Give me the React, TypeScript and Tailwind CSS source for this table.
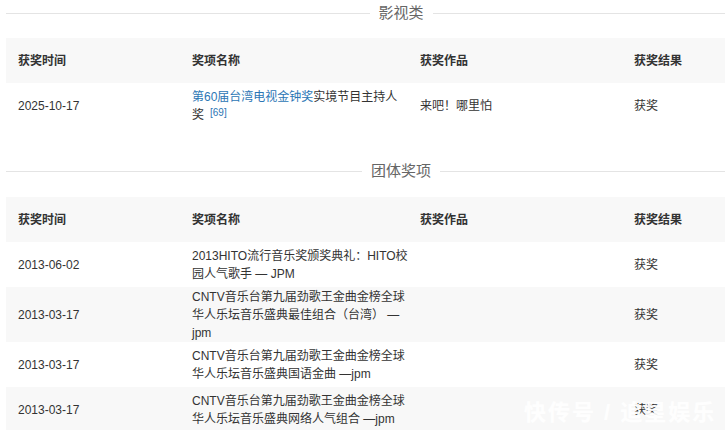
const FONT = "font-['Liberation_Sans','Noto_Sans_CJK_SC',sans-serif]";

type Row = { date: string; name: React.ReactNode; work?: string; result: string; h: string };

function SectionTitle({ title, className = "" }: { title: string; className?: string }) {
  return (
    <div className={`flex items-center h-[26px] ${className}`}>
      <div className="flex-1 h-px bg-[#e4e4e4]" />
      <span className="px-[9px] text-[15px] text-[#666] leading-[26px]">{title}</span>
      <div className="flex-1 h-px bg-[#e4e4e4]" />
    </div>
  );
}

function Cells({ a, b, c, d, bold = false }: { a: React.ReactNode; b: React.ReactNode; c?: React.ReactNode; d: React.ReactNode; bold?: boolean }) {
  const t = bold ? "font-bold" : "";
  return (
    <>
      <div className={`w-[174px] pl-3 ${t}`}>{a}</div>
      <div className={`w-[229px] pl-3 ${t}`}>
        <div className="w-[217px]">{b}</div>
      </div>
      <div className={`w-[213px] pl-[11px] ${t}`}>{c}</div>
      <div className={`flex-1 pl-3 ${t}`}>{d}</div>
    </>
  );
}

function Table({ rows }: { rows: Row[] }) {
  return (
    <div className="text-[12px] leading-[18px] text-[#333]">
      <div className="flex items-center h-[45px] bg-[#f8f8f8]">
        <Cells a="获奖时间" b="奖项名称" c="获奖作品" d="获奖结果" bold />
      </div>
      {rows.map((r, i) => (
        <div key={i} className={`flex items-center ${r.h} ${i % 2 === 1 ? "bg-[#f8f8f8]" : "bg-white"}`}>
          <Cells a={r.date} b={r.name} c={r.work} d={r.result} />
        </div>
      ))}
    </div>
  );
}

const film: Row[] = [
  {
    date: "2025-10-17",
    name: (
      <>
        <span className="text-[#2c76b5]">第60届台湾电视金钟奖</span>实境节目主持人奖
        <span className="ml-[6px] text-[10px] leading-none text-[#2c76b5] align-[3px]">[69]</span>
      </>
    ),
    work: "来吧！哪里怕",
    result: "获奖",
    h: "h-[45px]",
  },
];

const group: Row[] = [
  { date: "2013-06-02", name: "2013HITO流行音乐奖颁奖典礼：HITO校园人气歌手 — JPM", result: "获奖", h: "h-[45px]" },
  { date: "2013-03-17", name: "CNTV音乐台第九届劲歌王金曲金榜全球华人乐坛音乐盛典最佳组合（台湾） — jpm", result: "获奖", h: "h-[55px]" },
  { date: "2013-03-17", name: "CNTV音乐台第九届劲歌王金曲金榜全球华人乐坛音乐盛典国语金曲 —jpm", result: "获奖", h: "h-[45px]" },
  { date: "2013-03-17", name: "CNTV音乐台第九届劲歌王金曲金榜全球华人乐坛音乐盛典网络人气组合 —jpm", result: "获奖", h: "h-[45px]" },
];

export default function App() {
  return (
    <div className={`relative w-[725px] h-[430px] overflow-hidden bg-white ${FONT}`}>
      <div className="w-[790px] ml-[6px]">
        <SectionTitle title="影视类" />
        <div className="mt-3">
          <Table rows={film} />
        </div>
        <SectionTitle title="团体奖项" className="mt-[30px]" />
        <div className="mt-[13px]">
          <Table rows={group} />
        </div>
      </div>
      {/* watermark */}
      <div className="absolute left-[524px] top-[396px] whitespace-nowrap text-[22px] tracking-[2px] text-white/90 font-bold">
        快传号 / 追星娱乐
      </div>
    </div>
  );
}
